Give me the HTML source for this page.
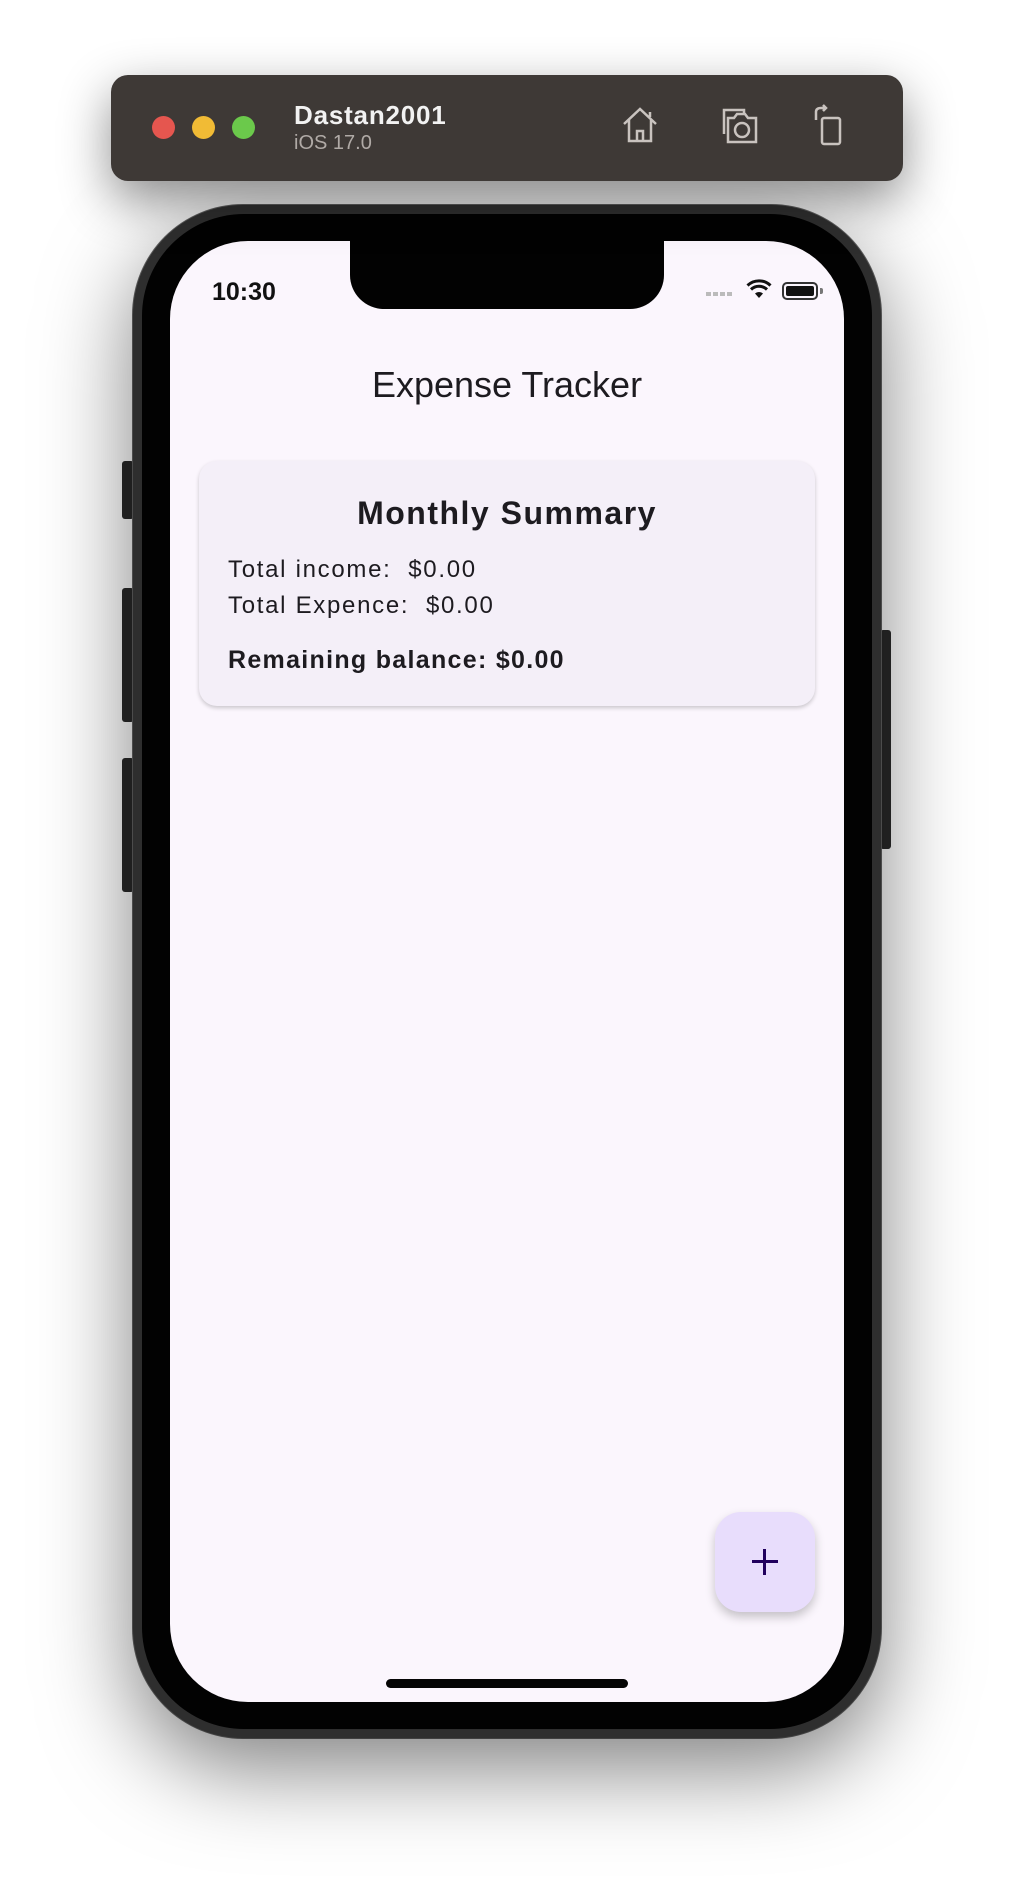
<!DOCTYPE html>
<html><head><meta charset="utf-8"><style>
*{margin:0;padding:0;box-sizing:border-box}
html,body{width:1014px;height:1892px;background:#fff;overflow:hidden;font-family:"Liberation Sans",sans-serif;position:relative}
.abs{position:absolute}
#tb{left:111px;top:75px;width:792px;height:106px;background:#3e3936;border-radius:17px;box-shadow:0 18px 50px rgba(0,0,0,.45)}
.dot{width:23px;height:23px;border-radius:50%;top:116px}
#phone{left:133px;top:205px;width:748px;height:1533px;border-radius:110px;background:#2e2e2e;box-shadow:0 30px 90px rgba(0,0,0,.5),0 0 0 1px #666}
#inner{left:142px;top:214px;width:730px;height:1515px;border-radius:102px;background:#020202}
#screen{left:170px;top:241px;width:674px;height:1461px;border-radius:78px;background:#fbf6fd;overflow:hidden}
.btn{background:#2a2a2a;border-radius:3px}
</style></head><body>
<div class="abs btn" style="left:122px;top:461px;width:12px;height:58px"></div>
<div class="abs btn" style="left:122px;top:588px;width:12px;height:134px"></div>
<div class="abs btn" style="left:122px;top:758px;width:12px;height:134px"></div>
<div class="abs btn" style="left:880px;top:630px;width:11px;height:219px"></div>
<div id="phone" class="abs"></div>
<div id="inner" class="abs"></div>
<div id="screen" class="abs">
  <div class="abs" style="left:180px;top:-1px;width:314px;height:69px;background:#020202;border-radius:0 0 34px 34px"></div>
  <div class="abs" style="left:42px;top:37px;font-size:25px;font-weight:bold;color:#111">10:30</div>
  <div class="abs" style="left:536px;top:51px;width:28px;height:4px;background:repeating-linear-gradient(90deg,#bbb 0 5px,transparent 5px 7px)"></div>
  <svg class="abs" style="left:576px;top:38px" width="26" height="20" viewBox="0 0 26 20"><path d="M13 19 L9 14.5 A6 6 0 0 1 17 14.5 Z" fill="#111"/><path d="M5 10.5 A11.5 11.5 0 0 1 21 10.5" stroke="#111" stroke-width="3" fill="none"/><path d="M1.5 6.5 A16.5 16.5 0 0 1 24.5 6.5" stroke="#111" stroke-width="3" fill="none"/></svg>
  <div class="abs" style="left:612px;top:41px;width:36px;height:18px;border:2px solid #333;border-radius:5px;padding:2px"><div style="width:100%;height:100%;background:#111;border-radius:2px"></div></div>
  <div class="abs" style="left:650px;top:47px;width:3px;height:6px;background:#777;border-radius:0 2px 2px 0"></div>
  <div class="abs" style="left:0;width:674px;top:123px;text-align:center;font-size:36px;color:#1d1b20">Expense Tracker</div>
  <div class="abs" style="left:29px;top:220px;width:616px;height:245px;background:#f4eff8;border-radius:18px;box-shadow:0 2px 4px rgba(0,0,0,.2)">
    <div class="abs" style="left:0;width:616px;top:34px;text-align:center;font-size:32px;font-weight:bold;color:#1d1b20;letter-spacing:1.5px">Monthly Summary</div>
    <div class="abs" style="left:29px;top:95px;font-size:24px;color:#1d1b20;letter-spacing:1.7px;white-space:pre">Total income:  $0.00</div>
    <div class="abs" style="left:29px;top:131px;font-size:24px;color:#1d1b20;letter-spacing:1.7px;white-space:pre">Total Expence:  $0.00</div>
    <div class="abs" style="left:29px;top:185px;font-size:25px;font-weight:bold;color:#1d1b20;letter-spacing:1.3px">Remaining balance: $0.00</div>
  </div>
  <div class="abs" style="left:545px;top:1271px;width:100px;height:100px;background:#e8ddfc;border-radius:26px;box-shadow:0 5px 10px rgba(0,0,0,.22)">
    <div class="abs" style="left:37px;top:48px;width:26px;height:3px;background:#21005d"></div>
    <div class="abs" style="left:48px;top:37px;width:3px;height:26px;background:#21005d"></div>
  </div>
  <div class="abs" style="left:216px;top:1438px;width:242px;height:9px;background:#050505;border-radius:5px"></div>
</div>
<div id="tb" class="abs"></div>
<div class="abs dot" style="left:152px;background:#e5564f"></div>
<div class="abs dot" style="left:192px;background:#f1bb35"></div>
<div class="abs dot" style="left:232px;background:#6bc94b"></div>
<div class="abs" style="left:294px;top:100px;font-size:26px;font-weight:bold;color:#f2f2f2;letter-spacing:.8px">Dastan2001</div>
<div class="abs" style="left:294px;top:132px;font-size:20px;color:#b0aaa6">iOS 17.0</div>
<svg class="abs" style="left:620px;top:106px" width="40" height="38" viewBox="0 0 40 38" fill="none" stroke="#c9c3bf" stroke-width="2.5"><path d="M4 18 L20 3 L36 18 M9 14 V35 H31 V14 M17 35 V25 H23 V35 M30 6 V11"/></svg>
<svg class="abs" style="left:718px;top:106px" width="44" height="40" viewBox="0 0 44 40" fill="none" stroke="#c9c3bf" stroke-width="2.5"><path d="M6 28 V4 H26 V8 M10 12 H16 L19 8 H27 L30 12 H38 V36 H10 Z"/><circle cx="24" cy="24" r="7"/></svg>
<svg class="abs" style="left:812px;top:104px" width="36" height="42" viewBox="0 0 36 42" fill="none" stroke="#c9c3bf" stroke-width="2.5"><rect x="10" y="14" width="18" height="26" rx="2"/><path d="M4 16 V8 Q4 4 9 4 H14 M11 1 L14 4 L11 7"/></svg>
</body></html>
